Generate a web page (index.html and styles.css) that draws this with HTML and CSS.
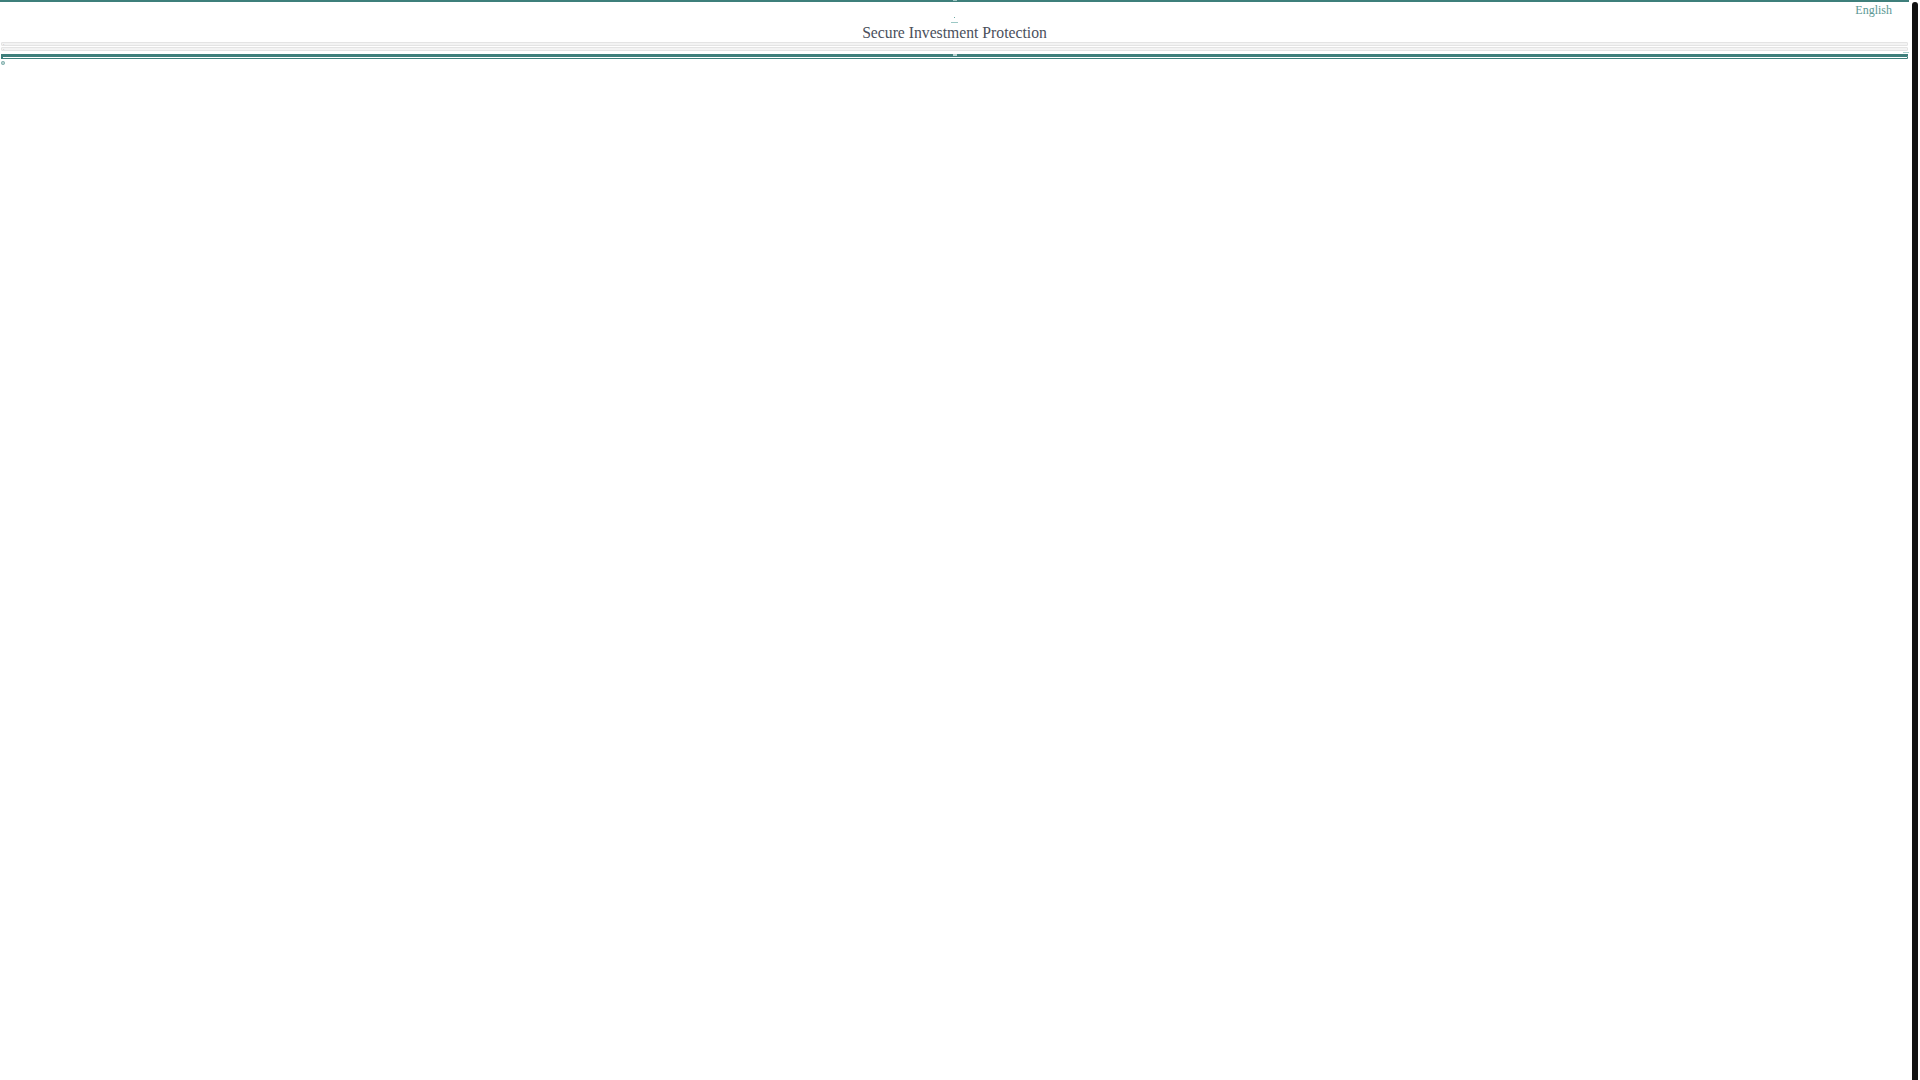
FILE: index.html
```html
<!DOCTYPE html>
<html lang="en">
<head>
<meta charset="utf-8">
<title>Secure Investment Protection</title>
<link rel="stylesheet" href="styles.css">
</head>
<body>
<div class="page">
  <div class="topbar"><span class="topmark"></span></div>
  <div class="lang">English</div>
  <div class="logo"><span class="logo-dot"></span><span class="logo-line"></span></div>
  <h1 class="title">Secure Investment Protection</h1>
  <div class="field"><span class="field-text">1 ···</span></div>
  <div class="field field-second"><span class="field-text">1 ···</span></div>
  <div class="tail"></div>
  <div class="rule"><span class="rule-mark"></span></div>
  <div class="bar"></div>
  <div class="foot">
    <svg class="foot-icon" viewBox="0 0 8 8" aria-hidden="true">
      <circle cx="4" cy="4" r="3.4" fill="none" stroke="#4f8f8b" stroke-width="1.2"/>
      <path d="M4 1.5V6.5M1.5 4H6.5" stroke="#4f8f8b" stroke-width="1"/>
    </svg>
    <span class="foot-text">···· ··· ·</span>
  </div>
</div>
<div class="scroll-thumb"></div>
</body>
</html>
```

FILE: styles.css
```css
html, body {
  margin: 0;
  padding: 0;
  background: #ffffff;
}

body {
  font-family: "Liberation Serif", "Times New Roman", serif;
  min-height: 1080px;
}

.page {
  width: 1909px;
  display: flex;
  flex-direction: column;
}

.topbar {
  height: 2px;
  background: #3e7f7b;
  display: flex;
  justify-content: center;
}

.topmark {
  width: 4px;
  height: 1px;
  background: #9fc6c3;
}

.lang {
  height: 14px;
  padding-top: 1px;
  line-height: 14px;
  font-size: 12px;
  color: #5b9894;
  text-align: right;
  padding-right: 17px;
}

.logo {
  height: 7px;
  display: flex;
  flex-direction: column;
  align-items: center;
}

.logo-dot {
  width: 1px;
  height: 1px;
  background: #6ea9a5;
}

.logo-line {
  margin-top: 4px;
  width: 7px;
  height: 1px;
  background: #9cc8c5;
}

.title {
  margin: 0;
  height: 18px;
  line-height: 18px;
  font-size: 15.7px;
  font-weight: normal;
  color: #4a505c;
  text-align: center;
}

.field {
  margin: 0 1px;
  height: 2px;
  border: 1px solid #e4e4e4;
  background: #f3f3f3;
  border-radius: 1px;
  display: flex;
  align-items: center;
  padding-left: 1px;
  overflow: hidden;
}

.field-second {
  margin-top: 0.5px;
}

.field-text {
  font-family: "Liberation Sans", Arial, sans-serif;
  font-size: 2px;
  line-height: 2px;
  color: #aaaaaa;
}

.tail {
  margin-top: 1.5px;
  align-self: flex-end;
  width: 6px;
  height: 1px;
  background: #a9cfcc;
}

.rule {
  margin: 1px 1px 0 1px;
  height: 1.5px;
  background: #3e7f7b;
  display: flex;
  justify-content: center;
}

.rule-mark {
  width: 4px;
  height: 1.5px;
  background: #b9d3d1;
}

.bar {
  margin: 0.5px 1px 0 1px;
  height: 1px;
  border: 1px solid #3e7f7b;
  border-left-width: 2px;
  border-radius: 0 1px 1px 0;
}

.foot {
  margin-top: 1.5px;
  padding-left: 1px;
  height: 6px;
  display: flex;
  align-items: flex-start;
  gap: 5px;
}

.foot-icon {
  width: 4px;
  height: 4px;
}

.foot-text {
  margin-top: 4px;
  font-family: "Liberation Sans", Arial, sans-serif;
  font-size: 2px;
  line-height: 2px;
  color: #9a9a9a;
}

.scroll-thumb {
  position: fixed;
  top: 2px;
  bottom: 0;
  right: 2px;
  width: 6px;
  background: #111111;
  border-radius: 3px 3px 0 0;
}
```
